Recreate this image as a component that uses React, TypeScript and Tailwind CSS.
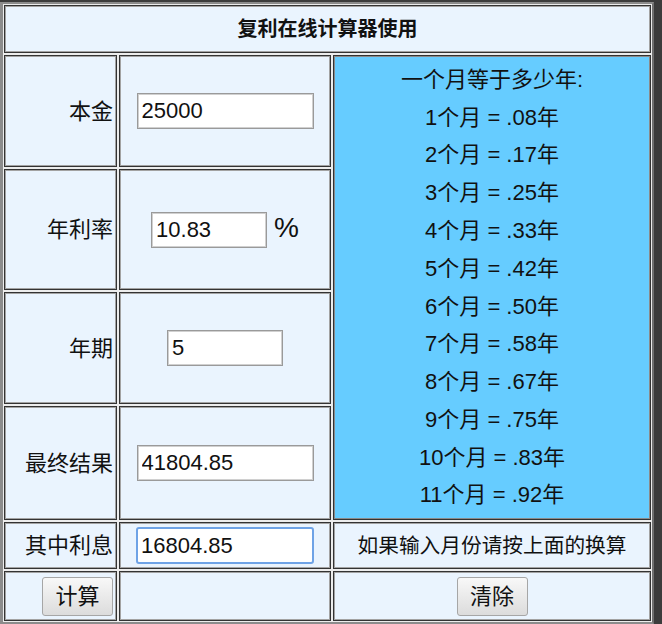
import React from "react";

const lines = [
  "一个月等于多少年:",
  "1个月 = .08年",
  "2个月 = .17年",
  "3个月 = .25年",
  "4个月 = .33年",
  "5个月 = .42年",
  "6个月 = .50年",
  "7个月 = .58年",
  "8个月 = .67年",
  "9个月 = .75年",
  "10个月 = .83年",
  "11个月 = .92年",
];

const cell =
  "bg-[#eaf4fe] border border-[#333333] shadow-[inset_0_0_0_1px_#a3a3a3] flex items-center";
const label = cell + " justify-end pr-[3px] text-[22px]";
const inputCls =
  "h-[36px] bg-white border border-[#9a9a9a] shadow-[inset_0_0_0_1px_#d0d0d0] px-[4px] text-[22px] text-[#111] outline-none";
const btn =
  "w-[71px] h-[39px] rounded-[3px] border border-[#a6a6a6] bg-gradient-to-b from-[#f8f8f8] to-[#dcdcdc] text-[22px] text-[#111] flex items-center justify-center";

export default function App() {
  return (
    <div
      className="w-[662px] h-[624px] bg-[#3c3c3c] overflow-hidden text-[#111]"
      style={{ fontFamily: '"Liberation Sans", "Noto Sans CJK SC", sans-serif' }}
    >
      <div className="mt-[2px] w-[654px] h-[622px] border-t-2 border-l-[3px] border-r-2 border-b-2 border-t-[#8c8c8c] border-l-[#8c8c8c] border-r-[#707070] border-b-[#8c8c8c] bg-[#ededed] p-px grid grid-cols-[113px_212px_1fr] grid-rows-[48px_112px_121px_112px_114px_47px_50px] gap-[2px]">
        <div className={cell + " col-span-3 justify-center text-[20px] font-bold"}>
          复利在线计算器使用
        </div>

        <div className={label}>本金</div>
        <div className={cell + " justify-center"}>
          <input className={inputCls + " w-[177px]"} defaultValue="25000" />
        </div>
        <div className="row-span-4 bg-[#66ccff] border border-[#333333] shadow-[inset_0_0_0_1px_#8a8a8a] flex flex-col items-center justify-center text-[22px]">
          {lines.map((l) => (
            <div key={l} className="leading-[37.8px] whitespace-pre">
              {l}
            </div>
          ))}
        </div>

        <div className={label}>年利率</div>
        <div className={cell + " justify-center"}>
          <input className={inputCls + " w-[116px]"} defaultValue="10.83" />
          <span className="ml-[7px] text-[28px] leading-none mb-[3px]">%</span>
        </div>

        <div className={label}>年期</div>
        <div className={cell + " justify-center"}>
          <input className={inputCls + " w-[116px]"} defaultValue="5" />
        </div>

        <div className={label}>最终结果</div>
        <div className={cell + " justify-center"}>
          <input className={inputCls + " w-[177px]"} defaultValue="41804.85" />
        </div>

        <div className={label}>其中利息</div>
        <div className={cell + " justify-center"}>
          <input
            className="w-[178px] h-[37px] bg-white border-2 border-[#6fa3e6] rounded-[3px] px-[3px] text-[22px] text-[#111] outline-none"
            defaultValue="16804.85"
          />
        </div>
        <div className={cell + " justify-center text-[20.7px]"}>
          如果输入月份请按上面的换算
        </div>

        <div className={cell + " justify-end pr-[3px]"}>
          <button className={btn}>计算</button>
        </div>
        <div className={cell}></div>
        <div className={cell + " justify-center"}>
          <button className={btn}>清除</button>
        </div>
      </div>
    </div>
  );
}
